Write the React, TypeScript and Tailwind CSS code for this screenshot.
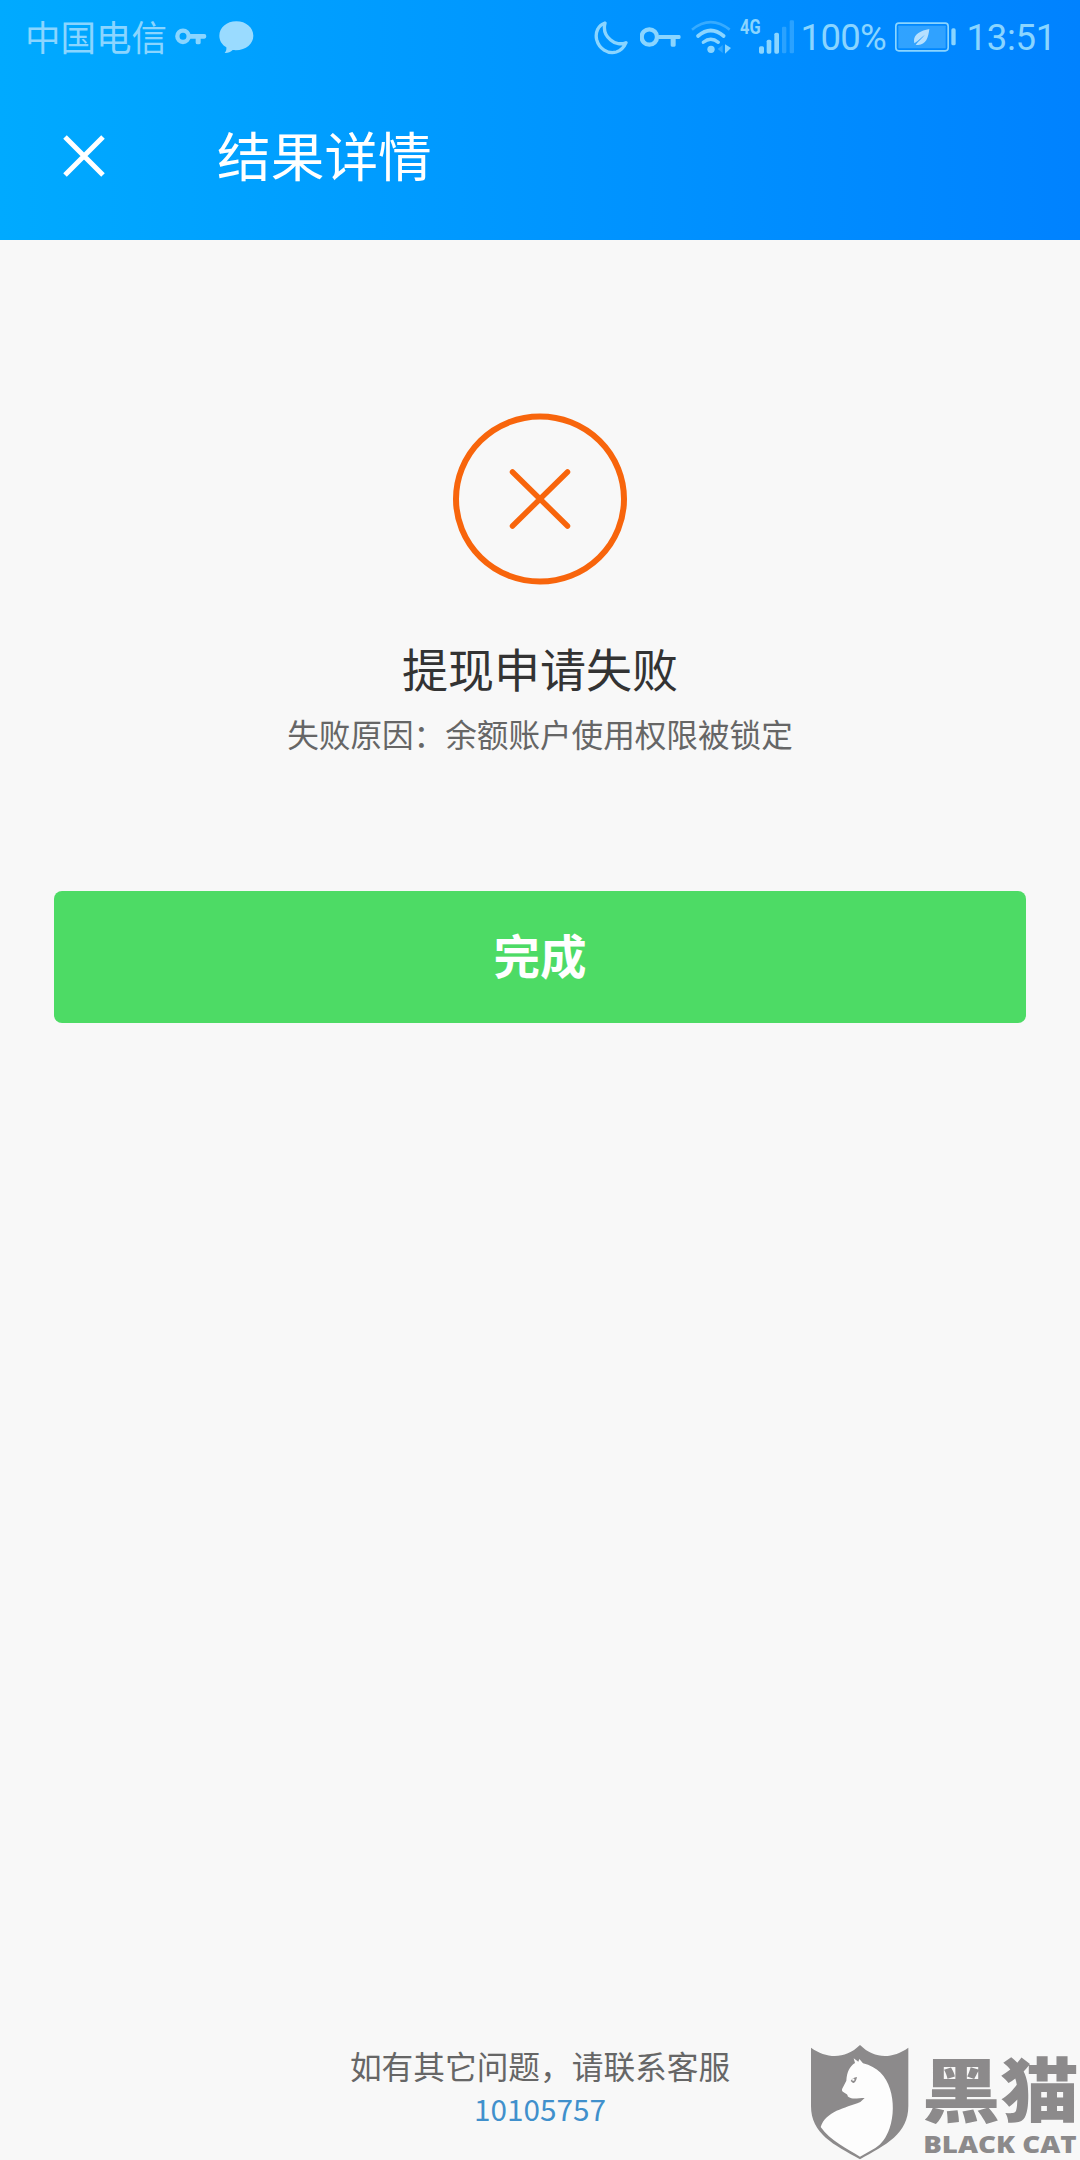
import type { ReactNode } from "react"

const cjk = "font-['Noto_Sans_CJK_SC',sans-serif]"

function LeftKeyIcon() {
    return (
        <svg className="ml-2 h-[18px] w-[33px]" viewBox="524 84 99 54" fill="none">
            <circle cx="548" cy="109" r="17" stroke="currentColor" strokeWidth="13" />
            <path d="M568 102h44q6 0 6 7t-6 7h-11v12q0 5-6 5h-3q-6 0-6-5v-12h-18z" fill="currentColor" />
        </svg>
    )
}

function BubbleIcon() {
    return (
        <svg className="ml-[11px] h-[33px] w-[35px] text-[#9adbff]" viewBox="656 61 105 99" fill="currentColor">
            <path d="M708 62c-29 0-51 19-51 43 0 15 8 27 21 35 1 8-1 12-5 17 8 1 18-3 24-9 37 4 62-17 62-43 0-24-22-43-51-43z" />
        </svg>
    )
}

function MoonIcon() {
    return (
        <svg className="h-[35px] w-[35px]" viewBox="46 57 105 105" fill="none">
            <path
                d="M79 66C58 73 49 94 54 116c7 27 33 44 59 37 13-4 23-14 29-28-14 6-33 4-46-8C80 104 74 86 79 66z"
                stroke="currentColor"
                strokeWidth="10"
                strokeLinejoin="round"
            />
        </svg>
    )
}

function VpnKeyIcon() {
    return (
        <svg className="ml-[11px] h-[20px] w-[41px]" viewBox="183 76 123 60" fill="none">
            <circle cx="211" cy="106" r="23" stroke="currentColor" strokeWidth="13" />
            <path d="M238 100h63q4 0 4 6t-4 6h-11v19q0 4-4 4h-7q-4 0-4-4v-19h-37z" fill="currentColor" />
        </svg>
    )
}

function WifiIcon() {
    return (
        <svg className="ml-[10px] h-[34px] w-[40px]" viewBox="334 56 120 102" fill="none">
            <path d="M337 85Q393 40 450 85" stroke="currentColor" strokeWidth="8" opacity=".4" />
            <path d="M355 104Q393 71 432 104" stroke="currentColor" strokeWidth="11" strokeLinecap="round" />
            <path d="M371 123Q393 105 416 123" stroke="currentColor" strokeWidth="10" strokeLinecap="round" />
            <circle cx="394" cy="144" r="11" fill="currentColor" />
            <path d="M429 131v24l-15-12z" fill="currentColor" opacity=".35" />
            <path d="M436 129v28l18-17z" fill="currentColor" />
        </svg>
    )
}

function SignalIcon() {
    return (
        <svg className="h-[34px] w-[37px]" viewBox="534 56 111 102" fill="currentColor">
            <rect x="537" y="135" width="15" height="22" rx="5" />
            <rect x="560" y="115" width="14" height="42" rx="5" />
            <rect x="583" y="94" width="14" height="63" rx="5" />
            <rect x="606" y="76" width="13" height="80" rx="4" opacity=".3" />
            <rect x="629" y="57" width="13" height="99" rx="4" opacity=".3" />
        </svg>
    )
}

function BatteryIcon() {
    return (
        <svg className="ml-[11px] h-[30px] w-[61px]" viewBox="228 65 183 90" fill="none">
            <rect x="230.500" y="68.500" width="157" height="83" rx="9" stroke="currentColor" strokeWidth="5" />
            <rect x="238" y="76" width="142" height="68" rx="2" fill="currentColor" opacity=".35" />
            <rect x="397" y="84" width="13" height="51" rx="5" fill="currentColor" />
            <path d="M331 86c-26 5-46 15-46 35l1 8c13-9 21-18 32-26-10 12-20 20-28 30 29 5 38-19 41-47z" fill="#b5e0ff" />
        </svg>
    )
}

function StatusBar() {
    return (
        <div className="flex h-[74px] items-center pl-[25px] pr-[24px] text-[#8ad5ff]">
            <span className={`${cjk} -mt-[2px] text-[35.500px] leading-[70px]`}>中国电信</span>
            <LeftKeyIcon />
            <BubbleIcon />
            <div className="ml-auto flex items-center font-['Roboto',sans-serif] text-[36.500px] leading-[74px]">
                <MoonIcon />
                <VpnKeyIcon />
                <WifiIcon />
                <span className="mb-[21px] ml-[9px] w-[18px] origin-left scale-x-[.78] text-[21px] leading-5 font-bold">4G</span>
                <SignalIcon />
                <span className="mt-[2px] ml-[6px] w-[83px] tracking-[-.7px]">100%</span>
                <BatteryIcon />
                <span className="mt-[2px] ml-[11px] tracking-[-.3px]">13:51</span>
            </div>
        </div>
    )
}

function Header({ title }: { title: string }) {
    return (
        <header className="h-60 bg-[linear-gradient(90deg,#00aaff,#0082ff)]">
            <StatusBar />
            <div className="flex h-[163px] items-center pl-[63px]">
                <svg className="h-[42px] w-[42px]" viewBox="0 0 42 42" stroke="#fff" strokeWidth="5">
                    <path d="M2 2l38 38M40 2L2 40" />
                </svg>
                <h1 className="-mt-[3px] ml-[112px] text-[53.700px] leading-[80px] text-white">{title}</h1>
            </div>
        </header>
    )
}

function FailIcon() {
    return (
        <svg className="h-[172px] w-[176px]" viewBox="0 0 176 172" fill="none" stroke="#f8650c">
            <ellipse cx="88" cy="86" rx="84" ry="82.500" strokeWidth="6" />
            <path d="M60.500 59l55 54M115.500 59l-55 54" strokeWidth="5.500" strokeLinecap="round" />
        </svg>
    )
}

function Center({ className, children }: { className: string; children: ReactNode }) {
    return <p className={`text-center whitespace-nowrap ${className}`}>{children}</p>
}

function BlackCatMark() {
    return (
        <div className="absolute top-[2044px] left-[810px] flex text-[#8c8a8b]">
            <svg className="h-[116px] w-[99px]" viewBox="60 42 297 348">
                <path
                    d="M63 53C111 87 166 88 210 45c44 43 97 42 145 8v175c0 84-67 116-145 160C132 344 63 312 63 228z"
                    fill="currentColor"
                />
                <path
                    d="M191 85l14 10 3-8 11 13c43 11 69 38 81 77 12 38 11 81-1 117-10 29-23 47-43 60l-46 26c-36-22-91-49-118-89 16-48 72-56 119-75l13-12c-18 0-37 5-47-2-7-5-1-6-9-11-14-6-14-11-9-19l10-20c2-27 10-43 26-53z"
                    fill="#fdfdfd"
                />
                <path d="M182 153c4-7 10-11 19-12-2 9-5 17-10 18-4 0-6-4-9-6z" fill="currentColor" />
                <circle cx="190" cy="149" r="3.500" fill="#fdfdfd" />
            </svg>
            <div className="ml-[13px] w-[154px]">
                <div className="mt-[8px] origin-left scale-x-[1.12] text-[70px] leading-[70px] font-black">黑猫</div>
                <div className="mt-[11px] origin-left scale-x-[1.22] pl-[1px] font-['Open_Sans',sans-serif] text-[22.700px] leading-[24px] font-extrabold whitespace-nowrap">
                    BLACK CAT
                </div>
            </div>
        </div>
    )
}

export default function App() {
    return (
        <div className={`relative flex h-[2160px] w-[1080px] flex-col overflow-hidden bg-[#f8f8f8] ${cjk}`}>
            <Header title="结果详情" />
            <main className="flex flex-col items-center px-[54px] pt-[173px]">
                <FailIcon />
                <Center className="mt-[49px] text-[46px] leading-[66px] text-[#333]">提现申请失败</Center>
                <Center className="mt-[10px] text-[31.600px] leading-[46px] text-[#666]">失败原因：余额账户使用权限被锁定</Center>
                <button className="mt-[135px] h-[132px] w-full rounded-lg bg-[#4ddb65] pb-[6px] text-[46.500px] font-bold text-white">
                    完成
                </button>
            </main>
            <footer className="mt-auto pb-[30px]">
                <Center className="text-[31.700px] leading-[46px] text-[#666]">如有其它问题，请联系客服</Center>
                <Center className="text-[29.700px] leading-[42px] text-[#4090cc]">10105757</Center>
            </footer>
            <BlackCatMark />
        </div>
    )
}
